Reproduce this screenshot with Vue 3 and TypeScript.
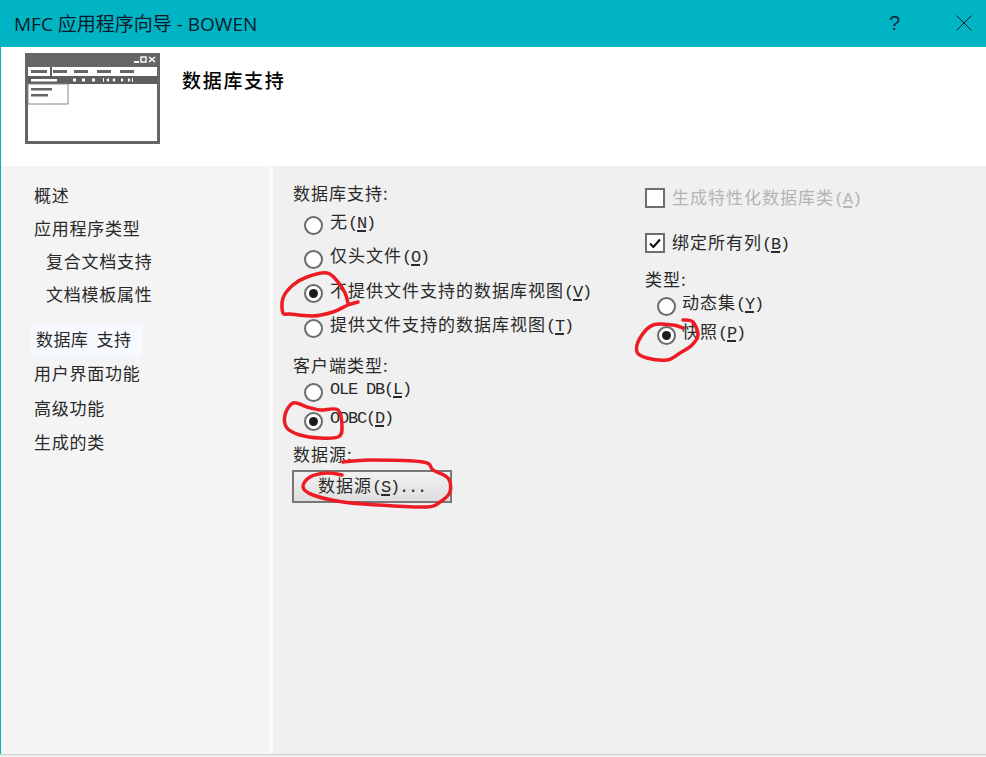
<script setup lang="ts">
type Opt = { cjk: string; key: string; latin?: string; checked?: boolean };

const dbOptions: Opt[] = [
  { cjk: '无', key: 'N' },
  { cjk: '仅头文件', key: 'O' },
  { cjk: '不提供文件支持的数据库视图', key: 'V', checked: true },
  { cjk: '提供文件支持的数据库视图', key: 'T' },
];
const clientOptions: Opt[] = [
  { cjk: '', latin: 'OLE DB', key: 'L' },
  { cjk: '', latin: 'ODBC', key: 'D', checked: true },
];
const typeOptions: Opt[] = [
  { cjk: '动态集', key: 'Y' },
  { cjk: '快照', key: 'P', checked: true },
];
const navItems = [
  { text: '概述', cls: '' },
  { text: '应用程序类型', cls: '' },
  { text: '复合文档支持', cls: 'sub' },
  { text: '文档模板属性', cls: 'sub' },
  { text: '数据库  支持', cls: 'active' },
  { text: '用户界面功能', cls: '' },
  { text: '高级功能', cls: 'gap' },
  { text: '生成的类', cls: 'last' },
];

const scribbles: number[][][] = [
  [[358,302],[348,305],[333,312],[313,316],[290,314],[283,313],[283,298],[293,285],[307,277],[327,273],[338,282],[345,293],[348,303]],
  [[307,407],[293,403],[285,415],[287,428],[300,435],[320,438],[338,437],[342,428],[338,410],[320,410],[307,407]],
  [[343,462],[370,460],[423,462],[433,470],[448,478],[450,492],[440,502],[427,507],[380,505],[343,502],[313,495],[303,487],[310,477],[327,473],[342,475]],
  [[683,320],[693,322],[698,335],[692,345],[680,353],[667,360],[647,358],[637,352],[640,338],[653,325],[673,325],[683,328]],
];

function smooth(p: number[][]): string {
  let d = `M${p[0][0]} ${p[0][1]}`;
  for (let i = 0; i < p.length - 1; i++) {
    const a = p[Math.max(i - 1, 0)];
    const b = p[i];
    const c = p[i + 1];
    const e = p[Math.min(i + 2, p.length - 1)];
    d += ` C${b[0] + (c[0] - a[0]) / 6} ${b[1] + (c[1] - a[1]) / 6} ${c[0] - (e[0] - b[0]) / 6} ${c[1] - (e[1] - b[1]) / 6} ${c[0]} ${c[1]}`;
  }
  return d;
}
const scribblePaths = scribbles.map(smooth);
</script>

<template>
  <div class="window">
    <div class="titlebar">
      <span class="title">MFC 应用程序向导 - BOWEN</span>
      <span class="help">?</span>
      <svg class="close" width="16" height="16" viewBox="0 0 16 16">
        <path d="M.5.5l15 15M15.5.5l-15 15" stroke="#10202c" stroke-width="1" fill="none" />
      </svg>
    </div>

    <div class="header">
      <svg class="logo" width="136" height="92" viewBox="0 0 136 92">
        <rect x="0" y="0" width="135" height="91" fill="#666" />
        <rect x="3" y="14" width="129" height="74" fill="#fff" />
        <rect x="3" y="23" width="129" height="8" fill="#5e5e5e" />
        <rect x="3" y="14" width="22" height="9" fill="#fff" />
        <rect x="25" y="14" width="2" height="9" fill="#5e5e5e" />
        <rect x="6" y="17" width="16" height="3" fill="#666" />
        <rect x="28" y="17" width="14" height="3" fill="#666" />
        <rect x="49" y="17" width="14" height="3" fill="#666" />
        <rect x="72" y="17" width="14" height="3" fill="#666" />
        <rect x="95" y="17" width="14" height="3" fill="#666" />
        <rect x="109" y="8" width="5" height="2" fill="#fff" />
        <rect x="116" y="4" width="5" height="5" fill="none" stroke="#fff" stroke-width="1.4" />
        <path d="M124 4l6 5M130 4l-6 5" stroke="#fff" stroke-width="1.6" />
        <rect x="6" y="26" width="26" height="2.5" fill="#fff" />
        <rect x="48" y="25.5" width="3" height="3" fill="#fff" />
        <rect x="57" y="25.5" width="3" height="3" fill="#fff" />
        <rect x="67" y="25.5" width="3" height="3" fill="#fff" />
        <path d="M78 25v4h1v-4zM84 25l-3 2 3 2zM90 25l-3 2 3 2zM96 25l3 2-3 2zM103 25l3 2-3 2zM107 25v4h1v-4z" fill="#fff" />
        <rect x="3" y="31" width="40" height="20" fill="#fff" stroke="#888" stroke-width="1" />
        <rect x="6" y="35" width="21" height="2.5" fill="#666" />
        <rect x="6" y="41" width="17" height="2.5" fill="#666" />
      </svg>
      <h1 class="heading">数据库支持</h1>
    </div>

    <div class="body">
      <nav class="sidebar">
        <div v-for="item in navItems" :key="item.text" class="nav-item" :class="item.cls">{{ item.text }}</div>
      </nav>

      <div class="divider"></div>

      <main class="content">
        <section class="col col-left">
          <div class="group-label first">数据库支持:</div>
          <div v-for="o in dbOptions" :key="o.key" class="radio-row tall">
            <span class="radio" :class="{ on: o.checked }"></span>
            <span class="label"><span class="cjk">{{ o.cjk }}</span><span class="mono">(<u>{{ o.key }}</u>)</span></span>
          </div>

          <div class="group-label client">客户端类型:</div>
          <div v-for="o in clientOptions" :key="o.key" class="radio-row">
            <span class="radio" :class="{ on: o.checked }"></span>
            <span class="label"><span class="mono">{{ o.latin }}(<u>{{ o.key }}</u>)</span></span>
          </div>

          <div class="group-label source">数据源:</div>
          <button class="button" type="button">
            <span class="cjk">数据源</span><span class="mono">(<u>S</u>)...</span>
          </button>
        </section>

        <section class="col col-right">
          <div class="check-row disabled">
            <span class="check"></span>
            <span class="label"><span class="cjk">生成特性化数据库类</span><span class="mono">(<u>A</u>)</span></span>
          </div>
          <div class="check-row second">
            <span class="check">
              <svg width="14" height="14" viewBox="0 0 14 14">
                <path d="M2 7.5l3.4 3.5L12 3.5" fill="none" stroke="#111" stroke-width="2.2" />
              </svg>
            </span>
            <span class="label"><span class="cjk">绑定所有列</span><span class="mono">(<u>B</u>)</span></span>
          </div>
          <div class="group-label types">类型:</div>
          <div v-for="o in typeOptions" :key="o.key" class="radio-row right">
            <span class="radio" :class="{ on: o.checked }"></span>
            <span class="label"><span class="cjk">{{ o.cjk }}</span><span class="mono">(<u>{{ o.key }}</u>)</span></span>
          </div>
        </section>
      </main>
    </div>

    <div class="footer"></div>

    <svg class="ink" width="986" height="757" viewBox="0 0 986 757">
      <path v-for="(d, i) in scribblePaths" :key="i" :d="d" fill="none" stroke="#ed1c24" stroke-width="3.5" stroke-linecap="round" stroke-linejoin="round" />
    </svg>
  </div>
</template>

<style scoped>
.window {
  position: relative;
  width: 986px;
  height: 757px;
  display: flex;
  flex-direction: column;
  overflow: hidden;
  background: #fff;
  font-family: "Noto Sans CJK SC", "Liberation Sans", sans-serif;
  color: #1a1a1a;
}
.titlebar {
  height: 47px;
  flex: none;
  display: flex;
  align-items: center;
  background: #00b4c3;
  padding-left: 14px;
  box-sizing: border-box;
}
.title {
  font-family: "Open Sans", "Noto Sans CJK SC", sans-serif;
  font-size: 19px;
  color: #0a1a2a;
  flex: 1;
  position: relative;
  top: -1px;
}
.help {
  font-family: "Liberation Sans", sans-serif;
  font-size: 20px;
  color: #12283c;
  width: 67px;
}
.close {
  margin-right: 14px;
  margin-top: -1px;
}
.header {
  height: 119px;
  flex: none;
  display: flex;
  align-items: flex-start;
  background: #fff;
  border-left: 1px solid #00b4c3;
  box-sizing: border-box;
}
.logo {
  margin: 6px 0 0 24px;
  flex: none;
}
.heading {
  margin: 19px 0 0 21px;
  font-size: 19px;
  line-height: 28px;
  letter-spacing: 1.7px;
  font-weight: 500;
  color: #000;
}
.body {
  flex: 1;
  display: flex;
  min-height: 0;
}
.sidebar {
  width: 269px;
  flex: none;
  border-left: 1px solid #00b4c3;
  background: #f4f4f4;
  padding-top: 14px;
  padding-left: 33px;
  box-sizing: border-box;
  display: flex;
  flex-direction: column;
  align-items: flex-start;
}
.nav-item {
  height: 33px;
  line-height: 30px;
  font-size: 17px;
  letter-spacing: 0.75px;
  color: #2a2a2a;
  white-space: pre;
}
.nav-item.sub {
  padding-left: 12px;
}
.nav-item.active {
  margin-top: 12px;
  margin-bottom: 1px;
  margin-left: -3px;
  padding: 0 1px 0 5px;
  width: 111px;
  box-sizing: border-box;
  background: #f6f9fe;
  letter-spacing: 0.4px;
}
.nav-item.gap {
  margin-top: 2px;
}
.nav-item.last {
  margin-top: 1px;
}
.divider {
  width: 4px;
  flex: none;
  background: #fafafa;
}
.content {
  flex: 1;
  background: #f0f0f0;
  display: flex;
  padding-left: 20px;
}
.col-left {
  width: 352px;
  flex: none;
  padding-top: 15px;
  box-sizing: border-box;
}
.col-right {
  padding-top: 22px;
}
.group-label {
  height: 24px;
  line-height: 24px;
  font-size: 17px;
  letter-spacing: 1px;
  color: #2a2a2a;
}
.group-label.first {
  margin-bottom: 3px;
}
.group-label.client {
  margin-top: 8px;
  margin-bottom: 1px;
}
.group-label.source {
  margin-top: 6px;
}
.group-label.types {
  margin-top: 14px;
  margin-bottom: 1px;
}
.radio-row {
  height: 29px;
  display: flex;
  align-items: center;
  padding-left: 11px;
}
.radio-row.tall {
  height: 34.33px;
}
.radio-row.right {
  padding-left: 12px;
}
.radio {
  width: 19px;
  height: 19px;
  flex: none;
  box-sizing: border-box;
  border-radius: 50%;
  border: 2px solid #6a6a6a;
  background: #fff;
  display: flex;
  align-items: center;
  justify-content: center;
}
.radio.on::after {
  content: "";
  width: 9px;
  height: 9px;
  border-radius: 50%;
  background: #1c1c1c;
}
.label {
  margin-left: 7px;
  padding-bottom: 11px;
  white-space: nowrap;
  color: #2a2a2a;
}
.radio-row.tall .label {
  padding-bottom: 9px;
}
.radio-row.right .label {
  margin-left: 6px;
  padding-bottom: 10px;
}
.cjk {
  font-size: 17px;
  letter-spacing: 1px;
}
.mono {
  font-family: "Liberation Mono", monospace;
  font-size: 17px;
  letter-spacing: -1.2px;
}
.mono u {
  text-underline-offset: 2px;
  text-decoration-thickness: 1.5px;
}
.button {
  display: block;
  margin: 4px 0 0 -1px;
  width: 160px;
  height: 33px;
  padding: 0 0 9px 24px;
  text-align: left;
  border: 2px solid #777;
  background: linear-gradient(#f1f1f1, #dfdfdf);
  color: #2a2a2a;
  font-family: "Noto Sans CJK SC", sans-serif;
  white-space: nowrap;
}
.check-row {
  height: 20px;
  display: flex;
  align-items: center;
}
.check-row.second {
  margin-top: 25px;
}
.check {
  width: 20px;
  height: 20px;
  flex: none;
  box-sizing: border-box;
  border: 2px solid #6e6e6e;
  background: #fff;
  display: flex;
  align-items: center;
  justify-content: center;
}
.check-row .label {
  margin-left: 7px;
  padding-bottom: 4px;
}
.check-row.disabled .label {
  color: #b4b4b4;
}
.footer {
  flex: none;
  height: 2px;
  background: #efefef;
  border-top: 1px solid #d0d0d0;
}
.ink {
  position: absolute;
  left: 0;
  top: 0;
  pointer-events: none;
}
</style>
